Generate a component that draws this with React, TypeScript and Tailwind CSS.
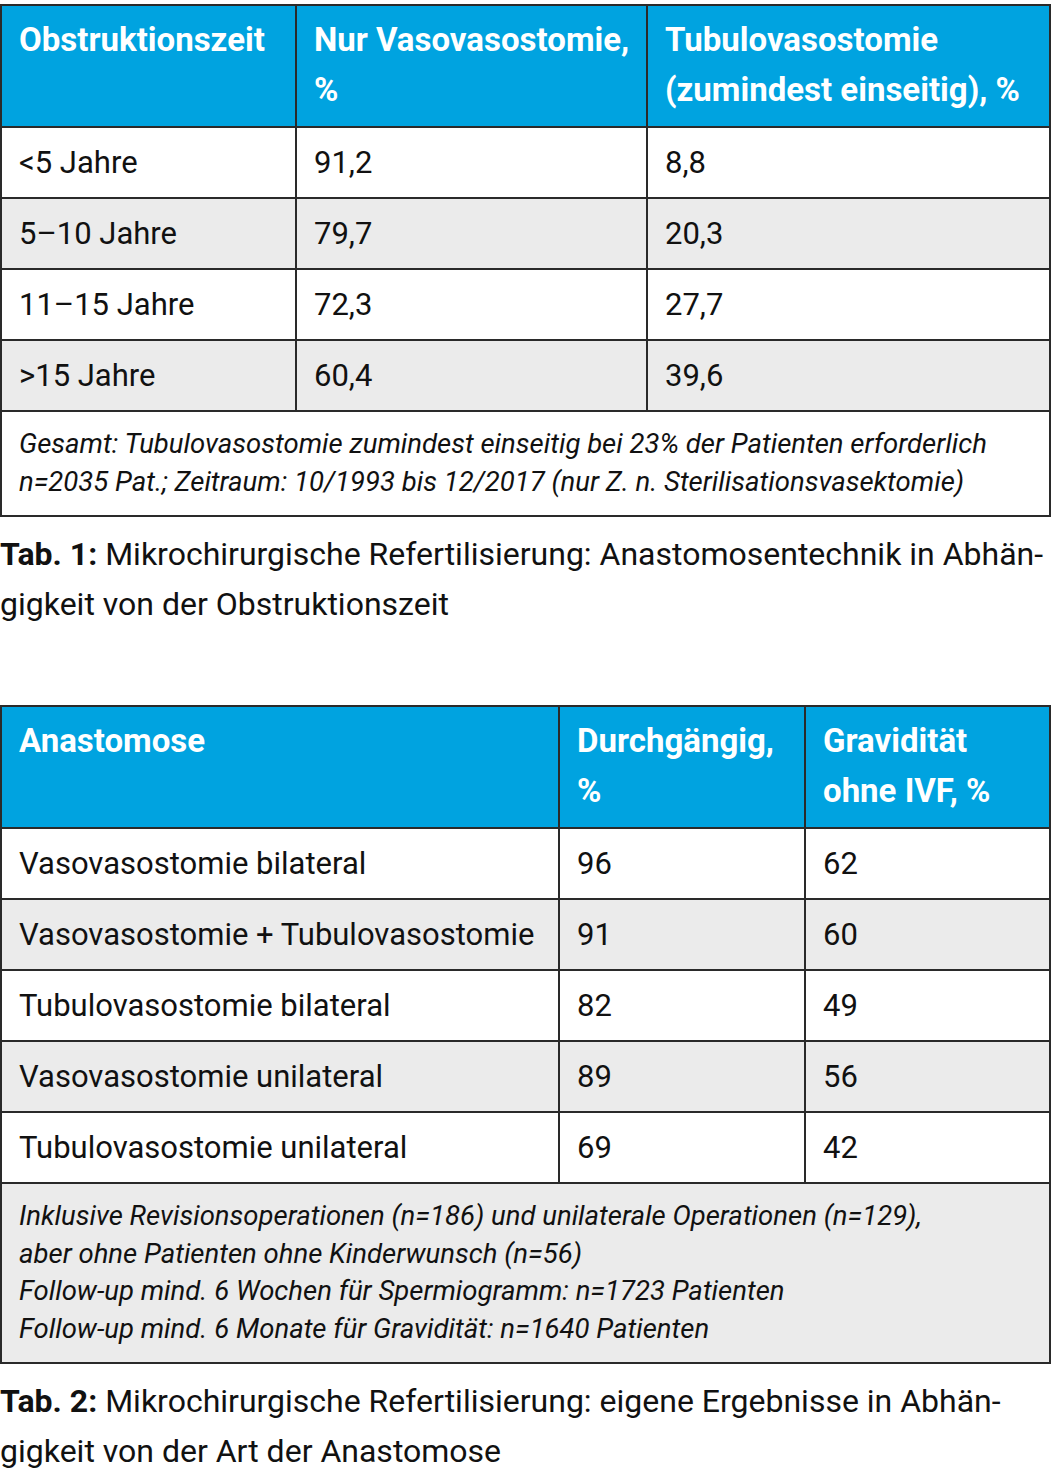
const headBg = 'bg-[#00a3e0]';

interface Note {
  lines: string[];
  gray?: boolean;
}

interface TableData {
  cols: string[];
  head: string[][];
  rows: string[][];
  note: Note;
  caption: string;
  title: string;
}

const tab1: TableData = {
  cols: ['w-[295px]', 'w-[351px]', ''],
  head: [['Obstruktionszeit'], ['Nur Vasovasostomie,', '%'], ['Tubulovasostomie', '(zumindest einseitig), %']],
  rows: [
    ['<5 Jahre', '91,2', '8,8'],
    ['5–10 Jahre', '79,7', '20,3'],
    ['11–15 Jahre', '72,3', '27,7'],
    ['>15 Jahre', '60,4', '39,6'],
  ],
  note: {
    lines: [
      'Gesamt: Tubulovasostomie zumindest einseitig bei 23% der Patienten erforderlich',
      'n=2035 Pat.; Zeitraum: 10/1993 bis 12/2017 (nur Z. n. Sterilisationsvasektomie)',
    ],
  },
  title: 'Tab. 1:',
  caption: ' Mikrochirurgische Refertilisierung: Anastomosentechnik in Abhän\u00ADgigkeit von der Obstruktionszeit',
};

const tab2: TableData = {
  cols: ['w-[558px]', 'w-[246px]', ''],
  head: [['Anastomose'], ['Durchgängig,', '%'], ['Gravidität', 'ohne IVF, %']],
  rows: [
    ['Vasovasostomie bilateral', '96', '62'],
    ['Vasovasostomie + Tubulovasostomie', '91', '60'],
    ['Tubulovasostomie bilateral', '82', '49'],
    ['Vasovasostomie unilateral', '89', '56'],
    ['Tubulovasostomie unilateral', '69', '42'],
  ],
  note: {
    gray: true,
    lines: [
      'Inklusive Revisionsoperationen (n=186) und unilaterale Operationen (n=129),',
      'aber ohne Patienten ohne Kinderwunsch (n=56)',
      'Follow-up mind. 6 Wochen für Spermiogramm: n=1723 Patienten',
      'Follow-up mind. 6 Monate für Gravidität: n=1640 Patienten',
    ],
  },
  title: 'Tab. 2:',
  caption: ' Mikrochirurgische Refertilisierung: eigene Ergebnisse in Abhän\u00ADgigkeit von der Art der Anastomose',
};

function DataTable({ data }: { data: TableData }) {
  return (
    <div>
      <table className="w-full border-collapse table-fixed">
        <colgroup>
          {data.cols.map((c, i) => (
            <col key={i} className={c} />
          ))}
        </colgroup>
        <thead>
          <tr>
            {data.head.map((h, i) => (
              <th
                key={i}
                className={`${headBg} border-2 border-[#2a2a2a] px-[17px] pt-[9px] pb-[11px] text-left align-top text-white font-bold text-[33px] leading-[50px]`}
              >
                {h.map((line, j) => (
                  <div key={j} className="whitespace-nowrap">{line}</div>
                ))}
              </th>
            ))}
          </tr>
        </thead>
        <tbody>
          {data.rows.map((row, idx) => (
            <tr key={idx} className={idx % 2 !== 0 ? 'bg-[#ebebeb]' : 'bg-white'}>
              {row.map((cell, i) => (
                <td
                  key={i}
                  className="border-2 border-[#2a2a2a] h-[71px] px-[17px] text-[31px] leading-[36px] text-[#111] align-middle whitespace-nowrap"
                >
                  {cell}
                </td>
              ))}
            </tr>
          ))}
          <tr className={data.note.gray ? 'bg-[#ebebeb]' : 'bg-white'}>
            <td
              colSpan={3}
              className="border-2 border-[#2a2a2a] px-[17px] pt-[13px] pb-[15px] italic text-[27.5px] leading-[37.5px] text-[#111]"
            >
              {data.note.lines.map((line, j) => (
                <div key={j} className="whitespace-nowrap">{line}</div>
              ))}
            </td>
          </tr>
        </tbody>
      </table>
      <p className="mt-[12px] text-[32px] leading-[50px] text-[#111]">
        <span className="font-bold">{data.title}</span>
        {data.caption}
      </p>
    </div>
  );
}

export default function App() {
  return (
    <div className="w-[1051px] bg-white pt-[4px] font-['Roboto',sans-serif]">
      <DataTable data={tab1} />
      <div className="h-[76px]" />
      <DataTable data={tab2} />
    </div>
  );
}
